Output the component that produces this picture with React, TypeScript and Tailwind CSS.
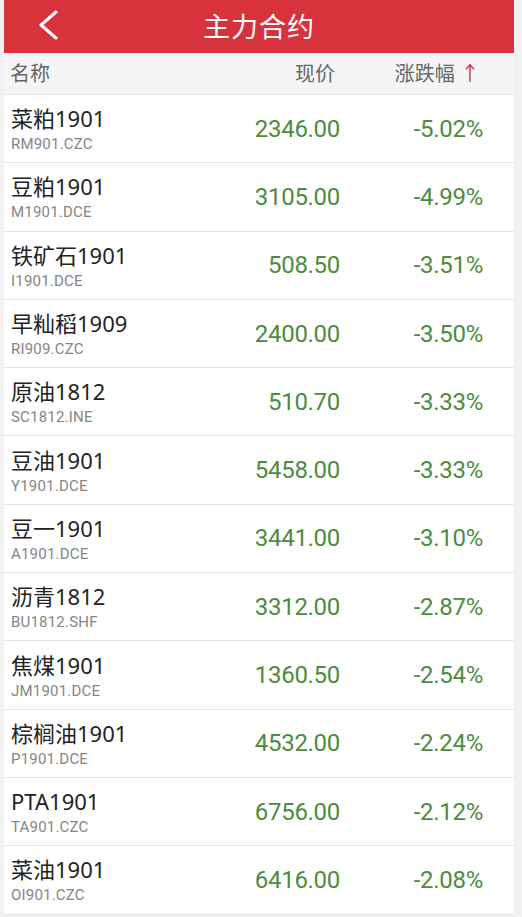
interface Contract {
  name: string
  code: string
  price: string
  change: string
}

const contracts: Contract[] = [
  { name: '菜粕1901', code: 'RM901.CZC', price: '2346.00', change: '-5.02%' },
  { name: '豆粕1901', code: 'M1901.DCE', price: '3105.00', change: '-4.99%' },
  { name: '铁矿石1901', code: 'I1901.DCE', price: '508.50', change: '-3.51%' },
  { name: '早籼稻1909', code: 'RI909.CZC', price: '2400.00', change: '-3.50%' },
  { name: '原油1812', code: 'SC1812.INE', price: '510.70', change: '-3.33%' },
  { name: '豆油1901', code: 'Y1901.DCE', price: '5458.00', change: '-3.33%' },
  { name: '豆一1901', code: 'A1901.DCE', price: '3441.00', change: '-3.10%' },
  { name: '沥青1812', code: 'BU1812.SHF', price: '3312.00', change: '-2.87%' },
  { name: '焦煤1901', code: 'JM1901.DCE', price: '1360.50', change: '-2.54%' },
  { name: '棕榈油1901', code: 'P1901.DCE', price: '4532.00', change: '-2.24%' },
  { name: 'PTA1901', code: 'TA901.CZC', price: '6756.00', change: '-2.12%' },
  { name: '菜油1901', code: 'OI901.CZC', price: '6416.00', change: '-2.08%' },
]

const font = { fontFamily: '"Noto Sans", "Noto Sans CJK SC", sans-serif' }
const numFont = { fontFamily: 'Roboto, "Noto Sans", sans-serif' }

export default function App() {
  return (
    <div className="min-h-screen bg-[#f1f1f1] pl-[4px] pr-[8px] overflow-hidden" style={font}>
      <div className="bg-white">
        {/* Title bar */}
        <div className="relative h-[53px] bg-[#d8323d] flex items-center justify-center">
          <svg className="absolute left-[33px] top-[10px]" width="24" height="30" viewBox="0 0 24 30" fill="none">
            <polyline points="19,2 4,15 19,28" stroke="white" strokeWidth="3" strokeLinecap="round" strokeLinejoin="round" />
          </svg>
          <h1 className="text-[27px] text-white leading-none tracking-[1px]">主力合约</h1>
        </div>

        {/* Column header */}
        <div className="h-[42px] bg-[#f5f5f5] flex items-center text-[20px] text-[#666] border-b border-[#e6e6e6]">
          <div className="flex-1 pl-[6px]">名称</div>
          <div className="w-[120px] text-right pr-[5px]">现价</div>
          <div className="w-[143px] text-right pr-[3px]">
            涨跌幅 <span className="text-[#d8323d]">↑</span>
          </div>
          <div className="w-[31px]" />
        </div>

        {/* Rows */}
        {contracts.map((c) => (
          <div key={c.code} className="h-[68.3px] flex items-center border-b border-[#e4e4e4]">
            <div className="flex-1 pl-[7px] flex flex-col pt-[1px]">
              <span className="text-[22px] leading-[26px] text-[#222]">{c.name}</span>
              <span className="mt-[4px] text-[15px] leading-[18px] text-[#858585] tracking-[0.2px]" style={numFont}>
                {c.code}
              </span>
            </div>
            <div className="w-[120px] text-right text-[24px] text-[#4c8c3e] tracking-[-0.3px]" style={numFont}>
              {c.price}
            </div>
            <div className="w-[143px] text-right text-[24px] text-[#4c8c3e] tracking-[-0.3px]" style={numFont}>
              {c.change}
            </div>
            <div className="w-[31px]" />
          </div>
        ))}
      </div>
    </div>
  )
}
